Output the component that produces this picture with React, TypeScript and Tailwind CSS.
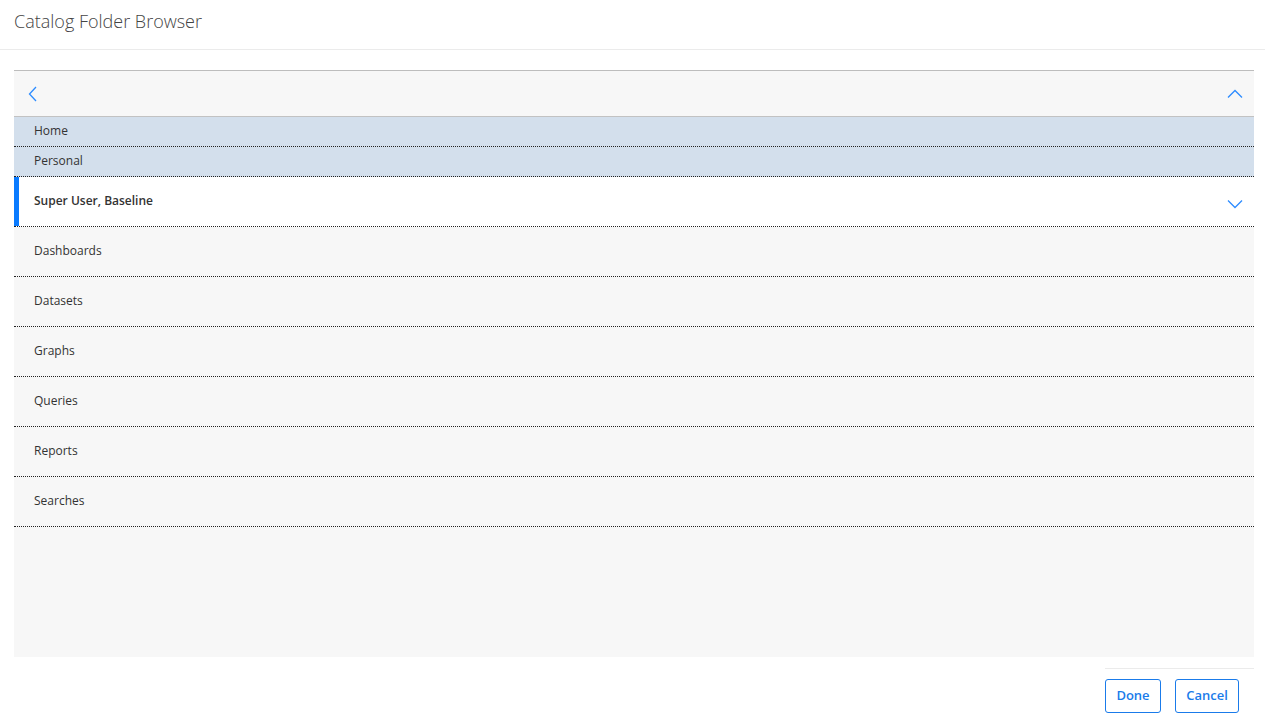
import React from "react";

const rows = ["Dashboards", "Datasets", "Graphs", "Queries", "Reports", "Searches"];

export default function App() {
  return (
    <div className="w-[1265px] h-[723px] bg-white overflow-hidden" style={{ fontFamily: '"Open Sans", "Noto Sans", sans-serif' }}>
      <div className="h-[50px] border-b border-[#ebebeb] flex items-center pl-[14px] pb-[6px]">
        <span className="text-[18px] font-light text-[#444]">Catalog Folder Browser</span>
      </div>
      <div className="ml-[14px] mt-[20px] w-[1240px] h-[587px] bg-[#f7f7f7] border-t border-[#bdbdbd] flex flex-col">
        <div className="h-[46px] border-b border-[#c2c2c2] flex items-center justify-between pl-[14px] pr-[11px]">
          <svg width="10" height="16" viewBox="0 0 10 16" fill="none">
            <path d="M8 1 L1.5 8 L8 15" stroke="#2d8cff" strokeWidth="1.3" />
          </svg>
          <svg width="16" height="10" viewBox="0 0 16 10" fill="none">
            <path d="M1 8.5 L8 1.5 L15 8.5" stroke="#2d8cff" strokeWidth="1.3" />
          </svg>
        </div>
        <div className="h-[30px] bg-[#d3dfec] border-b border-dotted border-[#222] flex items-center pl-[20px] pb-[1px] text-[12px] text-[#333]">Home</div>
        <div className="h-[30px] bg-[#d3dfec] border-b border-dotted border-[#222] flex items-center pl-[20px] pb-[1px] text-[12px] text-[#333]">Personal</div>
        <div className="h-[50px] bg-white border-b border-dotted border-[#222] flex">
          <div className="w-[5px] bg-[#0a7bff]"></div>
          <div className="flex-1 flex items-center justify-between pl-[15px] pr-[11px]">
            <span className="text-[12px] font-semibold text-[#333] mb-[1px]">Super User, Baseline</span>
            <svg width="16" height="10" viewBox="0 0 16 10" fill="none" className="mt-[4px]">
              <path d="M1 1.5 L8 8.5 L15 1.5" stroke="#2d8cff" strokeWidth="1.3" />
            </svg>
          </div>
        </div>
        {rows.map((r) => (
          <div key={r} className="h-[50px] border-b border-dotted border-[#222] flex items-center pl-[20px] pb-[1px] text-[12px] text-[#333]">{r}</div>
        ))}
      </div>
      <div className="ml-[1105px] mt-[11px] w-[149px] border-t border-[#ebebeb] pt-[10px] flex gap-[14px]">
        <button className="w-[56px] h-[34px] border border-[#1a7bea] rounded-[3px] text-[13px] font-semibold text-[#1a7bea] bg-white">Done</button>
        <button className="w-[64px] h-[34px] border border-[#1a7bea] rounded-[3px] text-[13px] font-semibold text-[#1a7bea] bg-white">Cancel</button>
      </div>
    </div>
  );
}
